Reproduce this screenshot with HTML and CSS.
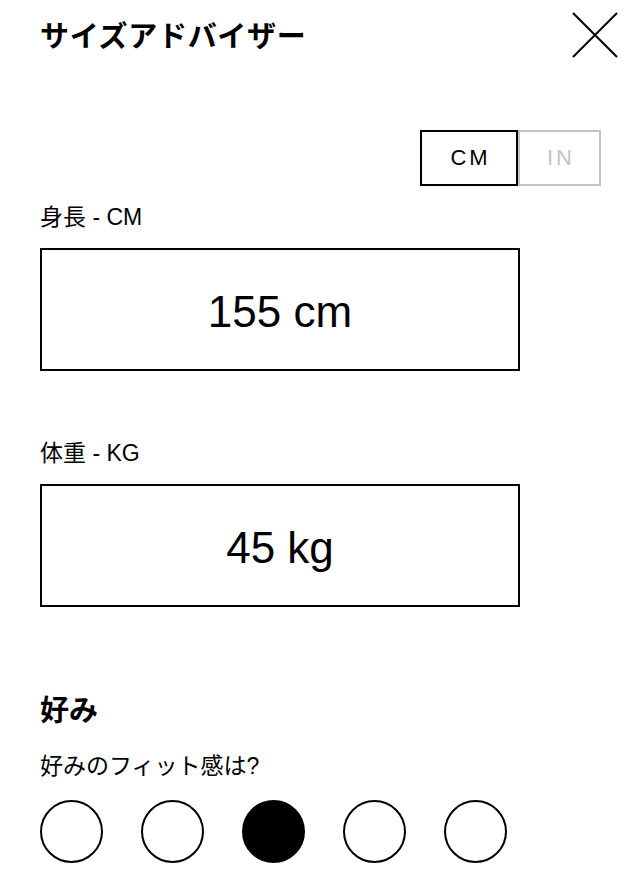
FILE: index.html
```html
<!DOCTYPE html>
<html lang="ja">
<head>
<meta charset="utf-8">
<title>サイズアドバイザー</title>
<link rel="stylesheet" href="styles.css">
</head>
<body>
<div class="page">
  <header class="header">
    <h1 class="title">サイズアドバイザー</h1>
    <button class="close" aria-label="閉じる">
      <svg width="46" height="46" viewBox="0 0 46 46"><path d="M1 1 L45 45 M45 1 L1 45" stroke="#000" stroke-width="2" fill="none"/></svg>
    </button>
  </header>

  <div class="units">
    <button class="unit unit-active">CM</button>
    <button class="unit unit-off">IN</button>
  </div>

  <div class="label label-first">身長 - CM</div>
  <div class="field">155 cm</div>

  <div class="label label-second">体重 - KG</div>
  <div class="field">45 kg</div>

  <h2 class="section">好み</h2>
  <div class="question">好みのフィット感は?</div>
  <div class="choices">
    <span class="dot"></span>
    <span class="dot"></span>
    <span class="dot dot-on"></span>
    <span class="dot"></span>
    <span class="dot"></span>
  </div>
</div>
</body>
</html>
```

FILE: styles.css
```css
html, body {
  margin: 0;
  padding: 0;
  background: #fff;
}
body {
  font-family: "Liberation Sans", "Noto Sans CJK JP", sans-serif;
  color: #000;
}
.page {
  padding: 12px 22px 0 40px;
}
.header {
  display: flex;
  align-items: center;
  justify-content: space-between;
  height: 45px;
}
.title {
  margin: 0;
  font-family: "Noto Sans CJK JP", sans-serif;
  font-weight: 700;
  font-size: 29px;
  letter-spacing: 0.7px;
  line-height: 29px;
}
.close {
  border: 0;
  padding: 0;
  background: none;
  width: 46px;
  height: 46px;
  display: block;
}
.close svg {
  display: block;
}
.units {
  display: flex;
  justify-content: flex-end;
  padding-right: 17px;
  margin-top: 73px;
}
.unit {
  font-family: "Liberation Sans", sans-serif;
  font-size: 22px;
  letter-spacing: 3px;
  height: 56px;
  background: #fff;
  box-sizing: border-box;
  padding: 0 0 0 3px;
  margin: 0;
}
.unit-active {
  width: 98px;
  border: 2px solid #000;
  color: #000;
}
.unit-off {
  width: 83px;
  border: 2px solid #c4c4c4;
  color: #c4c4c4;
}
.label {
  font-size: 23px;
  line-height: 28px;
}
.label-first {
  margin-top: 17px;
}
.label-second {
  margin-top: 68px;
}
.field {
  margin-top: 17px;
  width: 480px;
  height: 123px;
  box-sizing: border-box;
  border: 2px solid #000;
  display: flex;
  align-items: center;
  justify-content: center;
  padding-top: 4px;
  font-size: 44px;
}
.section {
  margin: 86px 0 0;
  font-weight: 700;
  font-size: 29px;
  line-height: 36px;
}
.question {
  margin-top: 23px;
  font-size: 23px;
  line-height: 28px;
}
.choices {
  display: flex;
  gap: 38px;
  margin-top: 20px;
}
.dot {
  width: 63px;
  height: 63px;
  box-sizing: border-box;
  border: 2px solid #000;
  border-radius: 50%;
  background: #fff;
}
.dot-on {
  background: #000;
}
```
